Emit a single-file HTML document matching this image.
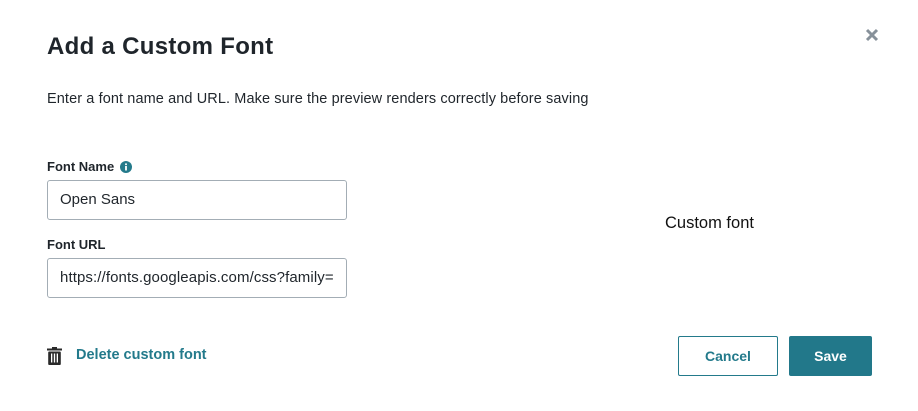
<!DOCTYPE html>
<html><head><style>
body{margin:0;width:918px;height:411px;background:#fff;font-family:"Liberation Sans",sans-serif;position:relative;overflow:hidden;color:#1f252b}
.a{position:absolute;white-space:nowrap}
.in{position:absolute;left:47px;width:298px;height:38px;border:1px solid #a3adb5;border-radius:3px;box-sizing:content-box;font-size:15px;line-height:38px;padding:0;text-indent:12px;color:#1f252b;overflow:hidden}
.lbl{font-size:13px;font-weight:bold}
.btn{position:absolute;top:336px;height:40px;box-sizing:border-box;border-radius:2px;font-size:14px;font-weight:bold;text-align:center;line-height:38px}
</style></head><body>
<div class="a" style="left:47px;top:33px;font-size:24px;font-weight:bold;letter-spacing:0.3px">Add a Custom Font</div>
<div class="a" style="left:47px;top:91px;font-size:14.5px;letter-spacing:0.1px">Enter a font name and URL. Make sure the preview renders correctly before saving</div>
<div class="a lbl" style="left:47px;top:159px">Font Name</div>
<svg class="a" style="left:120px;top:161px" width="12" height="12" viewBox="0 0 12 12"><circle cx="6" cy="6" r="6" fill="#237a8b"/><rect x="5.1" y="5" width="1.8" height="4.5" fill="#fff"/><circle cx="6" cy="3.3" r="1" fill="#fff"/></svg>
<div class="in" style="top:180px">Open Sans</div>
<div class="a lbl" style="left:47px;top:237px">Font URL</div>
<div class="in" style="top:258px;letter-spacing:0.1px">https://fonts.googleapis.com/css?family=</div>
<div class="a" style="left:665px;top:214px;font-size:16.5px;color:#111">Custom font</div>
<svg class="a" style="left:865px;top:28px" width="14" height="14" viewBox="0 0 14 14"><path d="M2 2L12 12M12 2L2 12" stroke="#87919a" stroke-width="3"/></svg>
<svg class="a" style="left:47px;top:347px" width="15" height="18" viewBox="0 0 15 18"><rect x="0" y="1.5" width="15" height="2" fill="#2a2a2a"/><rect x="5" y="0" width="5" height="2" fill="#2a2a2a"/><rect x="1.2" y="4.5" width="12.6" height="13.5" rx="1" fill="#2a2a2a"/><rect x="4" y="6.5" width="1.3" height="9" fill="#fff"/><rect x="6.85" y="6.5" width="1.3" height="9" fill="#fff"/><rect x="9.7" y="6.5" width="1.3" height="9" fill="#fff"/></svg>
<div class="a" style="left:76px;top:347px;font-size:14.5px;font-weight:bold;color:#237a8b">Delete custom font</div>
<div class="btn" style="left:678px;width:100px;border:1px solid #237a8b;color:#237a8b">Cancel</div>
<div class="btn" style="left:789px;width:83px;background:#22788a;color:#fff;line-height:40px">Save</div>
</body></html>
